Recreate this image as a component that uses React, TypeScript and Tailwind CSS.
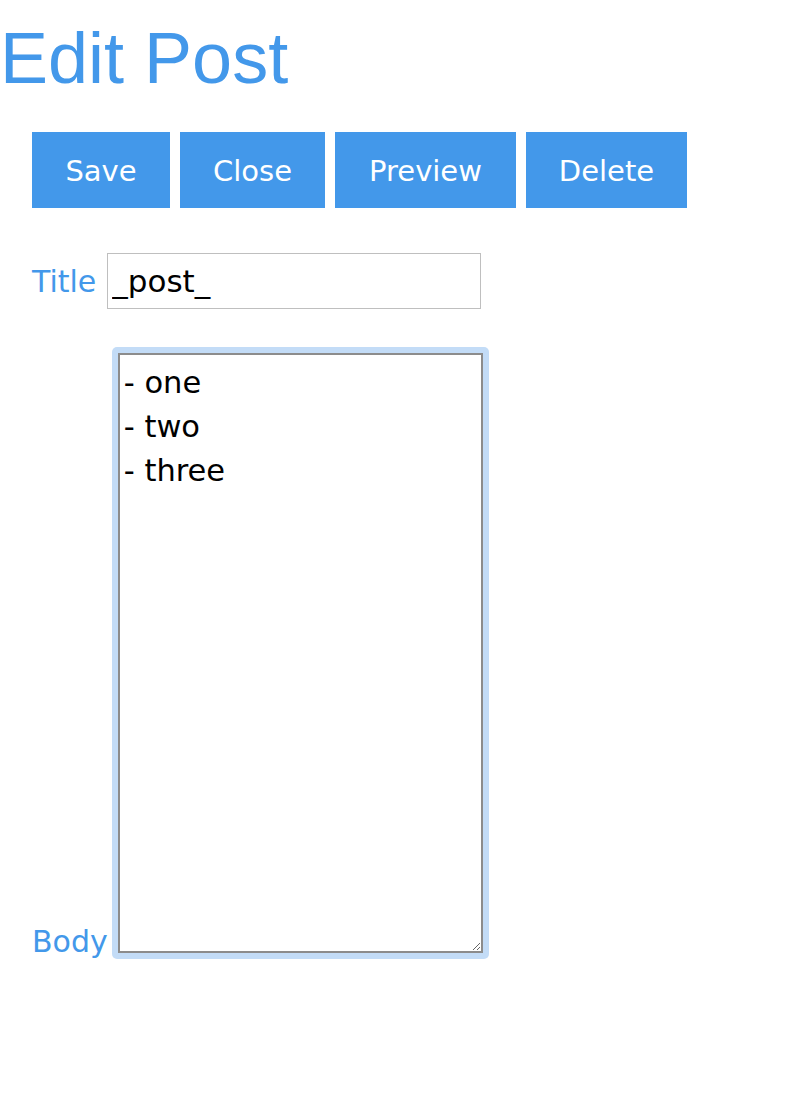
import React, { useState } from 'react';

const buttons = [
  { label: 'Save', width: 'w-[138px]' },
  { label: 'Close', width: 'w-[145px]' },
  { label: 'Preview', width: 'w-[181px]' },
  { label: 'Delete', width: 'w-[161px]' },
];

export default function App() {
  const [title, setTitle] = useState('_post_');
  const [body, setBody] = useState('- one\n- two\n- three');

  return (
    <div className="min-h-[1108px] w-[794px] bg-white font-['DejaVu_Sans',Verdana,sans-serif]">
      {/* Heading */}
      <h1 className="mt-[17px] font-['Liberation_Sans',Arial,sans-serif] text-[72px] leading-[83px] font-normal text-[#4398ea]">
        Edit Post
      </h1>

      <div className="pl-[32px]">
        {/* Toolbar */}
        <div className="mt-[32px] flex gap-[10px]">
          {buttons.map((b) => (
            <button
              key={b.label}
              type="button"
              className={`h-[76px] ${b.width} bg-[#4398ea] pt-[3px] text-white text-[29px] leading-none`}
            >
              {b.label}
            </button>
          ))}
        </div>

        {/* Title field */}
        <div className="mt-[45px] flex items-baseline gap-[11px]">
          <label className="text-[30px] text-[#4398ea]">Title</label>
          <input
            type="text"
            value={title}
            onChange={(e) => setTitle(e.target.value)}
            className="h-[56px] w-[374px] border border-[#bfbfbf] pl-[4px] text-[31px] text-black outline-none"
          />
        </div>

        {/* Body field */}
        <div className="mt-[38px] flex items-end gap-[4px]">
          <label className="mb-[2px] text-[30px] leading-[30px] text-[#4398ea]">Body</label>
          <div className="rounded-[5px] bg-[#c3dcf7] p-[6px]">
            <textarea
              value={body}
              onChange={(e) => setBody(e.target.value)}
              className="block h-[600px] w-[365px] border-2 border-[#8c8c8c] bg-white pt-[6px] pl-[4px] text-[30.5px] leading-[44px] text-black outline-none"
            />
          </div>
        </div>
      </div>
    </div>
  );
}
